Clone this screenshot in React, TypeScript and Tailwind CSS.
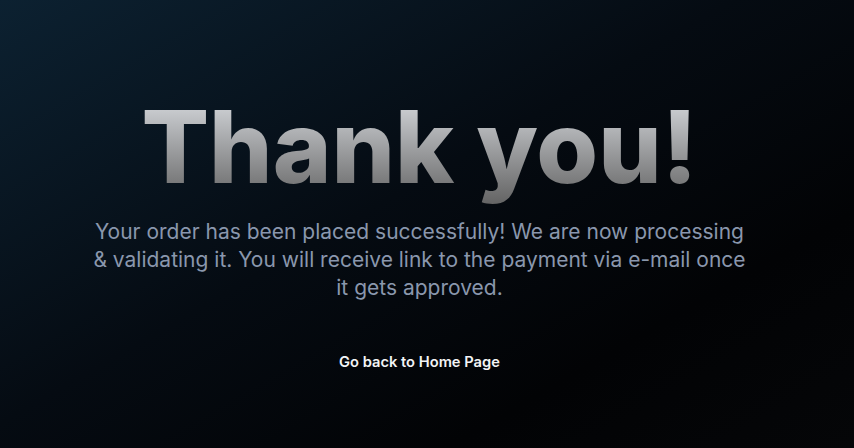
import React from "react";

export default function App() {
  return (
    <div
      className="w-full h-[448px] overflow-hidden bg-[linear-gradient(150deg,#0c2131_0%,#050b12_45%,#020305_75%,#050608_100%)]"
      style={{ fontFamily: "Inter, 'Noto Sans', sans-serif" }}
    >
      <div className="w-[839px] flex flex-col items-center">
        <h1 className="mt-[97px] text-[100px] leading-none font-extrabold bg-gradient-to-b from-[#d6d9dd] to-[#5f5f5f] bg-clip-text text-transparent pb-3">
          Thank you!
        </h1>
        <p className="mt-[9px] text-[21px] leading-[28px] text-[#8a97ad] text-center whitespace-nowrap">
          Your order has been placed successfully! We are now processing
          <br />
          &amp; validating it. You will receive link to the payment via e-mail once
          <br />
          it gets approved.
        </p>
        <a href="#" className="mt-[50px] text-[14.7px] leading-5 font-semibold text-[#f3f4f6]">
          Go back to Home Page
        </a>
      </div>
    </div>
  );
}
